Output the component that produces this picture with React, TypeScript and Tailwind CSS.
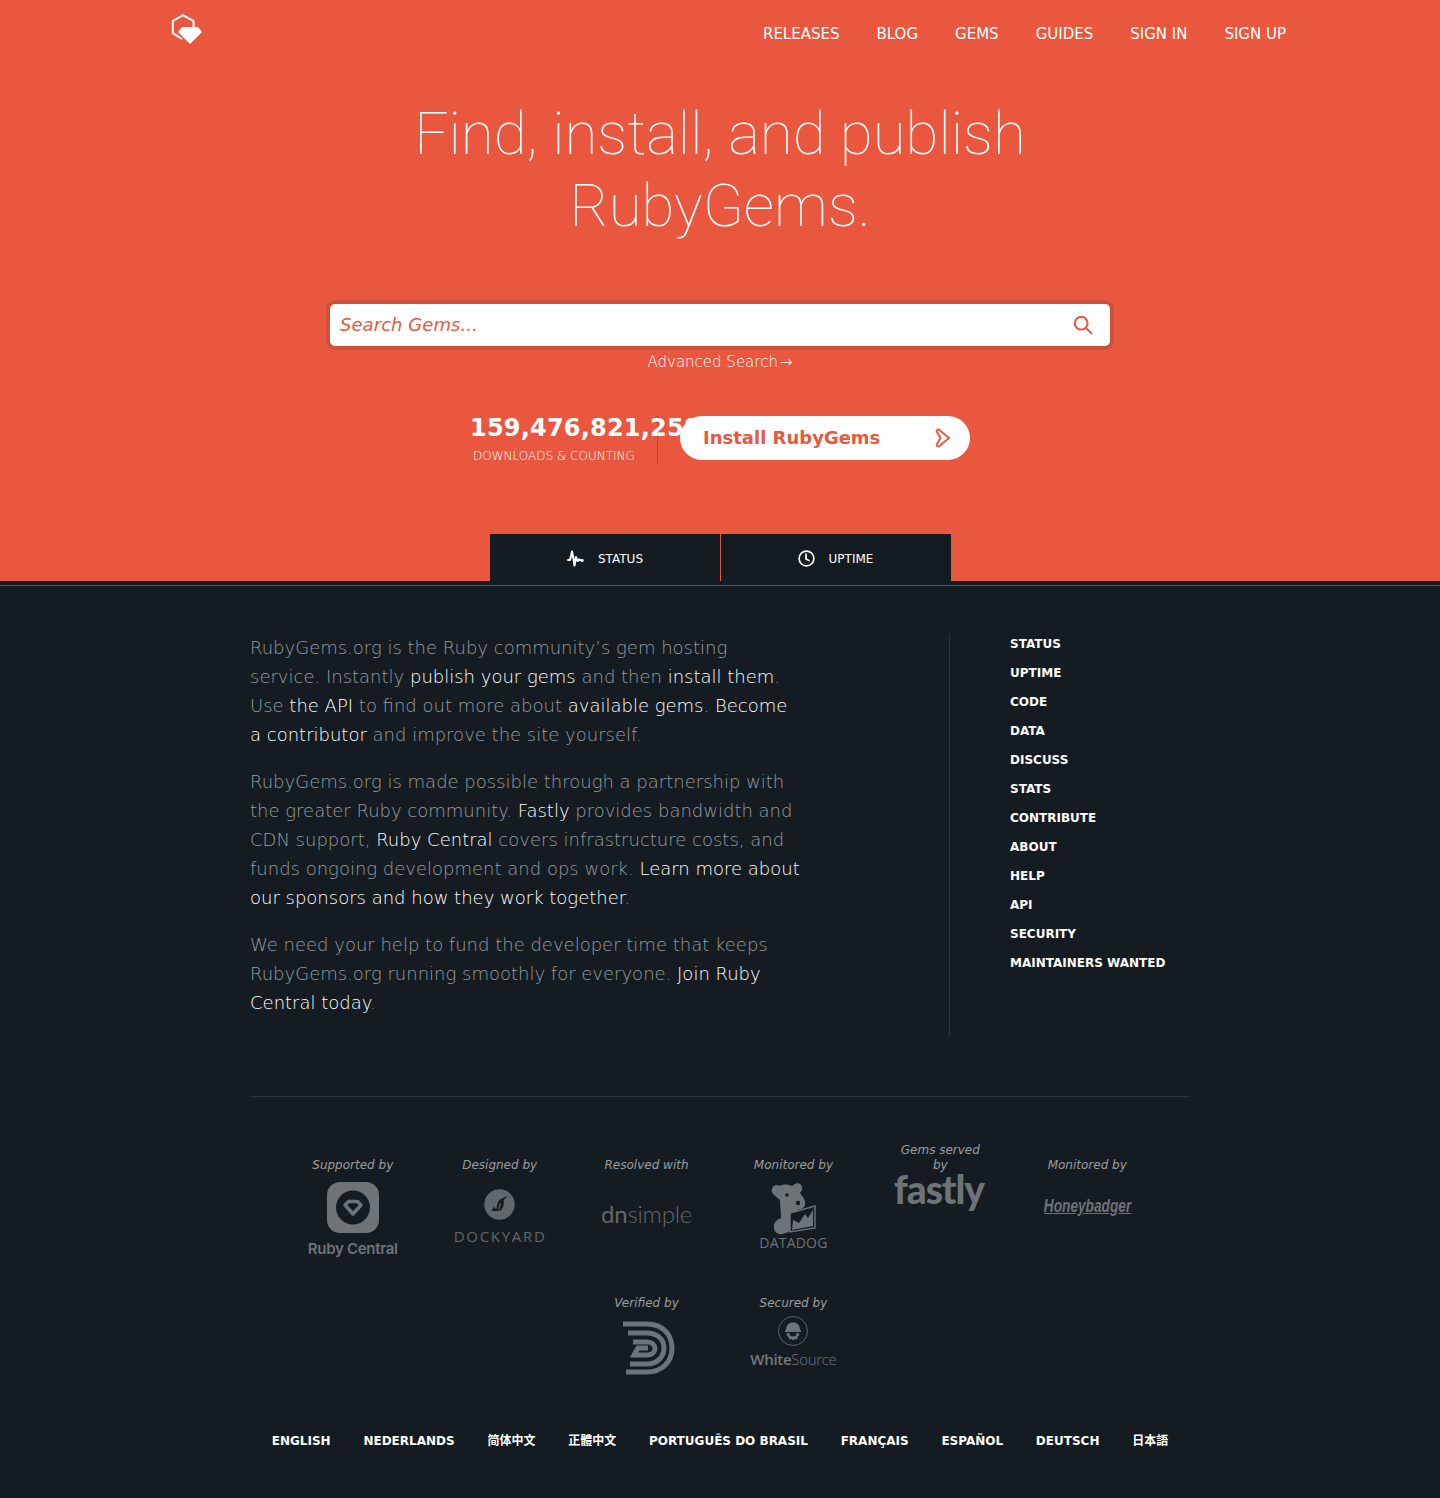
import React from "react";

const sans = "font-['DejaVu_Sans',sans-serif]";

function Logo() {
  return (
    <svg width="32" height="32" viewBox="0 0 32 32" className="shrink-0">
      <path d="M11 25 L1.8 19.2 V7 L12 1.2 L22.6 7 V14" fill="none" stroke="#fff" strokeWidth="2" />
      <path d="M7 18 L11 13 H27 L31 18 L19 30 Z" fill="#fff" />
    </svg>
  );
}

function Pulse() {
  return (
    <svg width="17" height="17" viewBox="0 0 17 17" fill="none" stroke="#fff" strokeWidth="2" strokeLinejoin="round" strokeLinecap="round">
      <path d="M1 10 H3 L5 1.5 L6.5 9 L7.5 15.5 L9 7 L10.5 11 L12 9.5 L14 10.5" />
      <circle cx="15.3" cy="10.5" r="1.4" fill="#fff" stroke="none" />
    </svg>
  );
}

function Clock() {
  return (
    <svg width="17" height="17" viewBox="0 0 17 17" fill="none" stroke="#fff" strokeWidth="1.7" strokeLinecap="round">
      <circle cx="8.5" cy="8.5" r="7.4" />
      <path d="M8 4.2 V9 L11 10.6" />
    </svg>
  );
}

function RubyCentralLogo() {
  return (
    <div className="flex flex-col items-center">
      <svg width="52" height="52" viewBox="0 0 52 52" className="mt-[1px]">
        <rect x="0" y="0" width="52" height="51" rx="13" fill="#6d7377" />
        <circle cx="26" cy="25.5" r="17" fill="#141c22" />
        <path d="M18 23 L21.5 19.5 H30.5 L34 23 L26 32 Z" fill="none" stroke="#6d7377" strokeWidth="3.5" strokeLinejoin="round" />
      </svg>
      <span className="mt-[6px] font-['Inter',sans-serif] text-[15px] leading-[18px] font-semibold tracking-[-0.3px] text-[#6d7377]">Ruby Central</span>
    </div>
  );
}

function DockyardLogo() {
  return (
    <div className="flex flex-col items-center pt-[8px]">
      <svg width="31" height="31" viewBox="0 0 31 31">
        <circle cx="15.5" cy="15.5" r="15.2" fill="#62676b" />
        <path d="M7 21 C9 21 9.5 19 10 17 C10.5 18.5 11 20 12.5 20 C13 16 14 11 17 10 L24 6.5 L19.5 11.5 C20.5 15 19 20 16 22 L14.5 22 C16 19 17 16 16.5 13.5 C15 14.5 15 19 14 22 L9 22 Z" fill="#141c22" />
      </svg>
      <span className="mt-[7px] pl-[1px] font-['Open_Sans',sans-serif] text-[15px] leading-[18px] tracking-[1.7px] text-[#62676b]">DOCKYARD</span>
    </div>
  );
}

function DnsimpleLogo() {
  return (
    <div className="flex justify-center pt-[16px]">
      <span className="font-['Lato',sans-serif] text-[24px] leading-[34px] font-light tracking-[-0.2px] text-[#62676b]">
        <span className="font-normal">dn</span>simple
      </span>
    </div>
  );
}

function DatadogLogo() {
  return (
    <div className="flex flex-col items-center pt-[1px]">
      <svg width="48" height="54" viewBox="0 0 48 54">
        <path d="M3 7 C4 3 8 2 11 4 C14 2 19 2 23 4 C26 1 30 0 32 3 C34 6 33 9 31 11 C34 15 37 19 36 23 C35 27 31 27 28 28 L28 36 C26 44 23 50 14 52 C7 53 4 48 5 43 C6 39 9 37 12 36 C12 30 11 24 11 18 C9 16 7 15 5 13 C3 11 2 9 3 7 Z" fill="#6d7377" />
        <circle cx="18" cy="13" r="1.8" fill="#141c22" />
        <circle cx="29" cy="21" r="2.2" fill="#141c22" />
        <path d="M21 31 L46 24 V46 L21 50 Z" fill="#141c22" stroke="#6d7377" strokeWidth="1.4" />
        <path d="M23 48 L24 38 L30 41 L36 32 L39 36 L44 28 V44 Z" fill="#6d7377" />
      </svg>
      <span className="mt-[-1px] font-['Open_Sans',sans-serif] text-[14px] leading-[16px] tracking-[0.2px] text-[#6d7377]">DATADOG</span>
    </div>
  );
}

function FastlyLogo() {
  return (
    <div className="mt-[-5px] flex justify-center pr-[3px]">
      <span className="font-['Lato',sans-serif] text-[39px] leading-[42px] font-black tracking-[-1.1px] text-[#6d7377]">fastly</span>
    </div>
  );
}

function HoneybadgerLogo() {
  return (
    <div className="flex justify-center pt-[14px]">
      <span className="inline-block scale-x-[0.76] font-['Liberation_Sans',sans-serif] text-[18px] leading-[22px] font-bold italic underline text-[#6d7377]">Honeybadger</span>
    </div>
  );
}

function DnLogo() {
  return (
    <div className="flex justify-center pt-[2px] pl-[2px]">
      <svg width="54" height="54" viewBox="0 0 54 54" fill="none" stroke="#6d7377" strokeWidth="5">
        <path d="M2 3 H26 C41 3 51 13 51 27 C51 41 41 51 26 51 H5" />
        <path d="M7 12 H26 C36 12 43 18 43 27 C43 36 36 43 26 43 H9" />
        <path d="M12 21 H26 C31 21 34 24 34 27.5 C34 31 31 34 26 34 H13 L17 27 H27" />
      </svg>
    </div>
  );
}

function WhiteSourceLogo() {
  return (
    <div className="mt-[-3px] flex flex-col items-center">
      <svg width="30" height="30" viewBox="0 0 30 30">
        <circle cx="15" cy="15" r="14.5" fill="none" stroke="#6d7377" strokeWidth="0.8" />
        <path d="M8 14 C8 9 11 6.5 15 6.5 C19 6.5 22 9 22 14 H23 V16 H7 V14 Z" fill="#6d7377" />
        <path d="M9.5 17 H20.5 L21.5 19 L19.5 21 L19 23.5 L16.5 23 L15 24.5 L13.5 23 L11 23.5 L10.5 21 L8.5 19 Z" fill="#6d7377" />
        <path d="M11.5 17 A3.5 3.5 0 0 0 18.5 17 Z" fill="#141c22" />
      </svg>
      <span className="mt-[4px] font-['Open_Sans',sans-serif] text-[15px] leading-[18px] tracking-[-0.3px] text-[#72787c]">
        <span className="font-semibold">White</span>
        <span className="font-light">Source</span>
      </span>
    </div>
  );
}

const sponsors = [
  { label: "Supported by", logo: <RubyCentralLogo />, gap: "mt-[8px]" },
  { label: "Designed by", logo: <DockyardLogo />, gap: "mt-[8px]" },
  { label: "Resolved with", logo: <DnsimpleLogo />, gap: "mt-[8px]" },
  { label: "Monitored by", logo: <DatadogLogo />, gap: "mt-[8px]" },
  { label: "Gems served by", logo: <FastlyLogo />, gap: "mt-[0px]" },
  { label: "Monitored by", logo: <HoneybadgerLogo />, gap: "mt-[8px]" },
  { label: "Verified by", logo: <DnLogo />, gap: "mt-[8px]" },
  { label: "Secured by", logo: <WhiteSourceLogo />, gap: "mt-[8px]" },
];

const navLinks = ["RELEASES", "BLOG", "GEMS", "GUIDES", "SIGN IN", "SIGN UP"];
const sideLinks = ["STATUS", "UPTIME", "CODE", "DATA", "DISCUSS", "STATS", "CONTRIBUTE", "ABOUT", "HELP", "API", "SECURITY", "MAINTAINERS WANTED"];
const langs = ["ENGLISH", "NEDERLANDS", "简体中文", "正體中文", "PORTUGUÊS DO BRASIL", "FRANÇAIS", "ESPAÑOL", "DEUTSCH", "日本語"];

function L({ children }: { children: React.ReactNode }) {
  return <a className="text-white">{children}</a>;
}

export default function App() {
  return (
    <div className={`${sans} min-h-[1498px] bg-[#141c22]`}>
      <header className="h-[581px] bg-[#e9573f]">
        <div className="flex h-[68px] items-start justify-between pl-[171px] pr-[154px]">
          <div className="pt-[14px]"><Logo /></div>
          <nav className="flex gap-[37px] pt-[25px] text-[15px] leading-[19px] text-white">
            {navLinks.map((n) => <a key={n}>{n}</a>)}
          </nav>
        </div>
        <h1 className="mx-auto mt-[30px] w-[760px] text-center font-['Roboto',sans-serif] text-[60px] leading-[72px] font-thin text-white">
          Find, install, and publish RubyGems.
        </h1>
        <div className="mx-auto mt-[62px] flex h-[42px] w-[780px] items-center justify-between rounded-[5px] bg-white pl-[10px] pr-[17px] shadow-[0_0_0_4px_#d1503a]">
          <span className="pb-[2px] text-[18px] font-extralight tracking-[0.05px] text-[#e9573f] italic">Search Gems...</span>
          <svg width="20" height="20" viewBox="0 0 20 20" fill="none" stroke="#e9573f" strokeWidth="2" strokeLinecap="round">
            <circle cx="8.2" cy="8.2" r="6.4" />
            <path d="M13 13 L18.4 18.4" />
          </svg>
        </div>
        <p className="mt-[7px] text-center text-[15px] leading-[18px] font-extralight text-white">Advanced Search<span className="ml-[2px]">→</span></p>
        <div className="mx-auto mt-[45px] flex h-[48px] w-[500px]">
          <div className="h-[48px] w-[188px] border-r border-[#c0422e]">
            <div className="text-[24px] leading-[24px] font-bold tracking-[0.2px] whitespace-nowrap text-white">159,476,821,258</div>
            <div className="mt-[8px] pl-[3px] text-[12px] leading-[16px] font-extralight whitespace-nowrap text-white">DOWNLOADS &amp; COUNTING</div>
          </div>
          <div className="relative z-10 ml-[22px] flex h-[44px] w-[290px] items-center justify-between rounded-[22px] bg-white pl-[23px] pr-[19px]">
            <span className="pb-[2px] text-[18px] font-bold text-[#e9573f]">Install RubyGems</span>
            <svg width="16" height="20" viewBox="0 0 16 20" fill="none" stroke="#e9573f" strokeWidth="2" strokeLinejoin="round">
              <path d="M4 1.5 C2.5 1 1 2.6 2 4 L5.5 10 L2 16 C1 17.4 2.5 19 4 18.3 L5 17.5 L14 10 L5 2.5 Z" />
            </svg>
          </div>
        </div>
        <div className="mx-auto mt-[70px] flex h-[47px] w-[461px]">
          <a className="flex h-[47px] w-[230px] items-center justify-center gap-[14px] bg-[#141c22] pt-[2px] pl-[1px] text-[12px] text-white"><Pulse />STATUS</a>
          <div className="w-[1px] shrink-0 bg-[#e9573f]" />
          <a className="flex h-[47px] w-[230px] items-center justify-center gap-[14px] bg-[#141c22] pt-[2px] text-[12px] text-white"><Clock />UPTIME</a>
        </div>
      </header>

      <div className="mt-[4px] h-[1px] bg-[#53585c]" />

      <main className="mx-auto w-[940px]">
        <div className="mt-[48px] flex">
          <div className="h-[402px] w-[700px] border-r border-[#2a3238]">
            <div className="mt-[-1px] w-[552px] text-[18px] leading-[29px] font-extralight text-[#9a9c9e]">
              <p>RubyGems.org is the Ruby community’s gem hosting service. Instantly <L>publish your gems</L> and then <L>install them</L>. Use <L>the API</L> to find out more about <L>available gems</L>. <L>Become a contributor</L> and improve the site yourself.</p>
              <p className="mt-[18px]">RubyGems.org is made possible through a partnership with the greater Ruby community. <L>Fastly</L> provides bandwidth and CDN support, <L>Ruby Central</L> covers infrastructure costs, and funds ongoing development and ops work. <L>Learn more about our sponsors and how they work together</L>.</p>
              <p className="mt-[18px]">We need your help to fund the developer time that keeps RubyGems.org running smoothly for everyone. <L>Join Ruby Central today</L>.</p>
            </div>
          </div>
          <nav className="flex flex-col gap-[11px] pt-[1px] pl-[60px] text-[12px] leading-[18px] font-bold text-white">
            {sideLinks.map((s) => <a key={s}>{s}</a>)}
          </nav>
        </div>

        <div className="mt-[60px] h-[1px] bg-[#2a3238]" />

        <div className="mt-[46px] flex flex-wrap justify-center">
          {sponsors.map((s, i) => (
            <div key={i} className="h-[138px] w-[146.9px] text-center">
              <div className="mx-auto flex h-[30px] w-[92px] flex-col justify-end text-[12px] leading-[15px] font-extralight text-[#9a9c9e] italic">
                {s.label}
              </div>
              <div className={s.gap}>{s.logo}</div>
            </div>
          ))}
        </div>

        <div className="mt-[13px] flex justify-center gap-[32.75px] text-[12px] leading-[18px] font-bold text-white">
          {langs.map((l) => <a key={l} className="font-['DejaVu_Sans','Noto_Sans_CJK_SC',sans-serif] whitespace-nowrap">{l}</a>)}
        </div>
      </main>
    </div>
  );
}
